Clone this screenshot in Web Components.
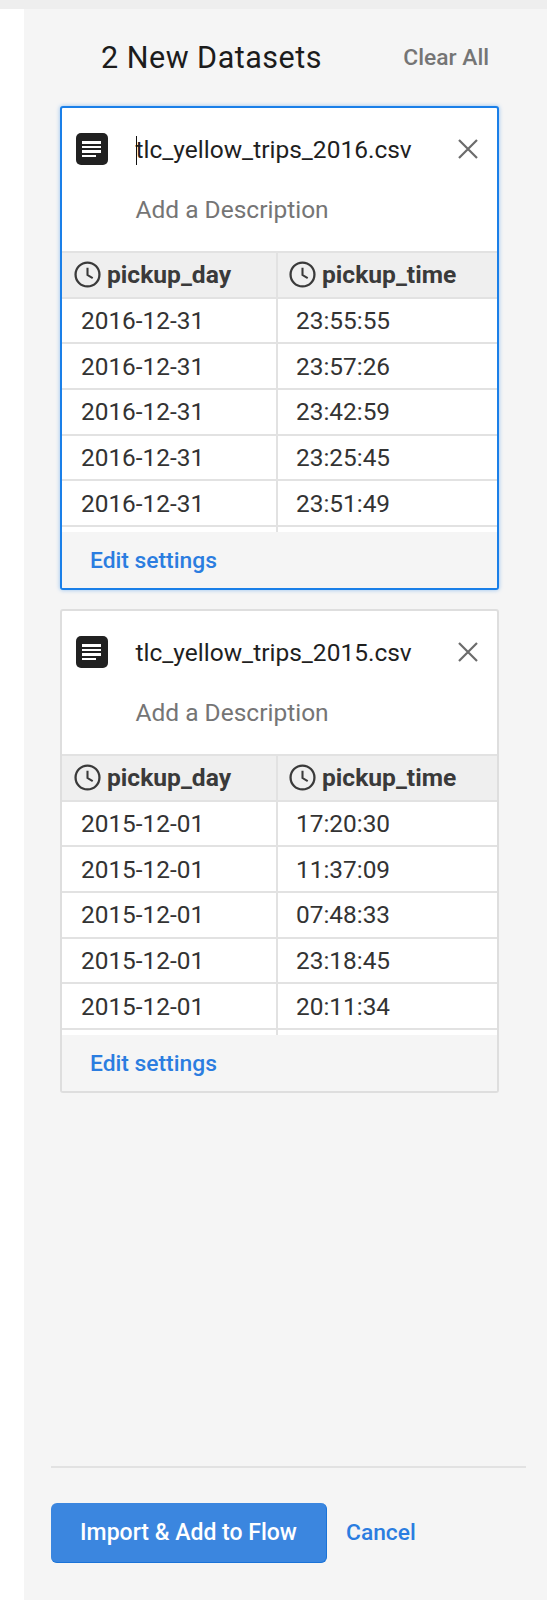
<!DOCTYPE html>
<html>
<head>
<meta charset="utf-8">
<style>
  html, body { margin: 0; padding: 0; background: #fff; }
  body { font-family: Roboto, sans-serif; }
</style>
</head>
<body>
<dataset-panel>
  <dataset-card name="tlc_yellow_trips_2016.csv" focused
    rows="2016-12-31,23:55:55;2016-12-31,23:57:26;2016-12-31,23:42:59;2016-12-31,23:25:45;2016-12-31,23:51:49"></dataset-card>
  <dataset-card name="tlc_yellow_trips_2015.csv"
    rows="2015-12-01,17:20:30;2015-12-01,11:37:09;2015-12-01,07:48:33;2015-12-01,23:18:45;2015-12-01,20:11:34"></dataset-card>
</dataset-panel>

<script>
class DatasetPanel extends HTMLElement {
  constructor() {
    super();
    this.attachShadow({ mode: 'open' });
  }

  connectedCallback() {
    this.shadowRoot.innerHTML = `
      <style>
        :host { display: block; height: 1600px; box-sizing: border-box; padding-top: 9px; background: #eeeeee; }
        .wrap { display: flex; height: 1591px; background: #fff; padding-left: 24px; }
        .panel { flex: 1; display: flex; flex-direction: column; background: #f5f5f5; box-sizing: border-box; }
        .top { display: flex; align-items: center; height: 97px; box-sizing: border-box; padding: 0 58px 0 77px; justify-content: space-between; }
        h1 { margin: 0; font-size: 30.5px; font-weight: 400; color: #1c1c1c; letter-spacing: .5px; }
        .clear { font-size: 22.8px; font-weight: 500; color: #757575; }
        .cards { display: flex; flex-direction: column; gap: 19px; padding: 0 48px 0 36px; }
        .bottom { margin-top: auto; margin-left: 27px; margin-right: 21px; border-top: 2px solid #e2e2e2; padding-top: 35px; height: 97px; display: flex; align-items: flex-start; gap: 19px; }
        button { width: 276px; height: 60px; border: 0; border-bottom: 1px solid #1a73d8; border-right: 1px solid #1a73d8; border-radius: 6px; background: #3b86df; color: #fff; font: 500 23px Roboto, sans-serif; padding: 0; }
        .cancel { font-size: 22.8px; font-weight: 500; color: #2b7de0; line-height: 60px; }
      </style>
      <div class="wrap">
        <div class="panel">
          <div class="top"><h1>2 New Datasets</h1><span class="clear">Clear All</span></div>
          <div class="cards"><slot></slot></div>
          <div class="bottom"><button>Import &amp; Add to Flow</button><span class="cancel">Cancel</span></div>
        </div>
      </div>
    `;
  }
}

class DatasetCard extends HTMLElement {
  constructor() {
    super();
    this.attachShadow({ mode: 'open' });
  }

  connectedCallback() {
    const rows = this.getAttribute('rows').split(';').map(r => r.split(','));
    const clock = `<svg width="27" height="27" viewBox="0 0 26 26" fill="none" stroke="#3a3a3a" style="flex:none"><circle cx="13" cy="13" r="11.5" stroke-width="2.2"/><path d="M13 6.5V13.5L18 16.5" stroke-width="2"/></svg>`;
    this.shadowRoot.innerHTML = `
      <style>
        :host { display: block; }
        .card { height: 484px; box-sizing: border-box; background: #fff; border: 2px solid #dedede; border-radius: 3px; display: flex; flex-direction: column; overflow: hidden; }
        :host([focused]) .card { border-color: #1a7fe8; box-shadow: 0 0 4px rgba(26,127,232,.45); }
        .head { height: 82px; display: flex; align-items: center; padding: 0 16px 0 14px; box-sizing: border-box; }
        .doc { flex: none; width: 32px; height: 32px; border-radius: 5px; background: #212121; display: flex; flex-direction: column; justify-content: center; gap: 2px; padding-left: 6px; box-sizing: border-box; margin-right: 27.5px; }
        .doc i { display: block; height: 2.5px; background: #fff; width: 19px; }
        .doc i:last-child { width: 14px; }
        .name { flex: 1; font-size: 24.5px; color: #1f1f1f; white-space: nowrap; position: relative; }
        :host([focused]) .name::before { content: ""; position: absolute; left: 0; top: 1px; bottom: -1px; width: 1px; background: #111; }
        .desc { padding-left: 73.5px; height: 61px; font-size: 24.5px; color: #757575; line-height: 40px; }
        .x { flex: none; width: 20px; height: 20px; margin-right: 3px; }
        .tbl { flex: 1; overflow: hidden; display: grid; grid-template-columns: 216px 1fr; grid-auto-rows: 45.7px; border-top: 2px solid #e2e2e2; align-content: start; }
        .c { box-sizing: border-box; border-bottom: 2px solid #e2e2e2; display: flex; align-items: center; font-size: 24.4px; color: #333; padding-left: 19px; }
        .c:nth-child(2n+1) { border-right: 2px solid #e2e2e2; }
        .c:nth-child(2n) { padding-left: 18px; }
        .c.th { background: #efefef; font-weight: 700; font-size: 24.6px; color: #3a3a3a; padding-left: 12px; gap: 6px; }
        .c.th:nth-child(2n) { padding-left: 11px; }
        .foot { flex: none; height: 56px; background: #f5f5f5; display: flex; align-items: center; padding-left: 28px; font-size: 22.8px; font-weight: 500; color: #2b7de0; }
      </style>
      <div class="card">
        <div class="head">
          <div class="doc"><i></i><i></i><i></i><i></i></div>
          <div class="name">${this.getAttribute('name')}</div>
          <svg class="x" viewBox="0 0 20 20" stroke="#6b6b6b" stroke-width="2.2" fill="none"><path d="M1 1L19 19M19 1L1 19"/></svg>
        </div>
        <div class="desc">Add a Description</div>
        <div class="tbl">
          <div class="c th">${clock}pickup_day</div>
          <div class="c th">${clock}pickup_time</div>
          ${rows.map(r => `<div class="c">${r[0]}</div><div class="c">${r[1]}</div>`).join('')}
          <div class="c" style="border-bottom:0"></div><div class="c" style="border-bottom:0"></div>
        </div>
        <div class="foot">Edit settings</div>
      </div>
    `;
  }
}

customElements.define('dataset-panel', DatasetPanel);
customElements.define('dataset-card', DatasetCard);
</script>
</body>
</html>
